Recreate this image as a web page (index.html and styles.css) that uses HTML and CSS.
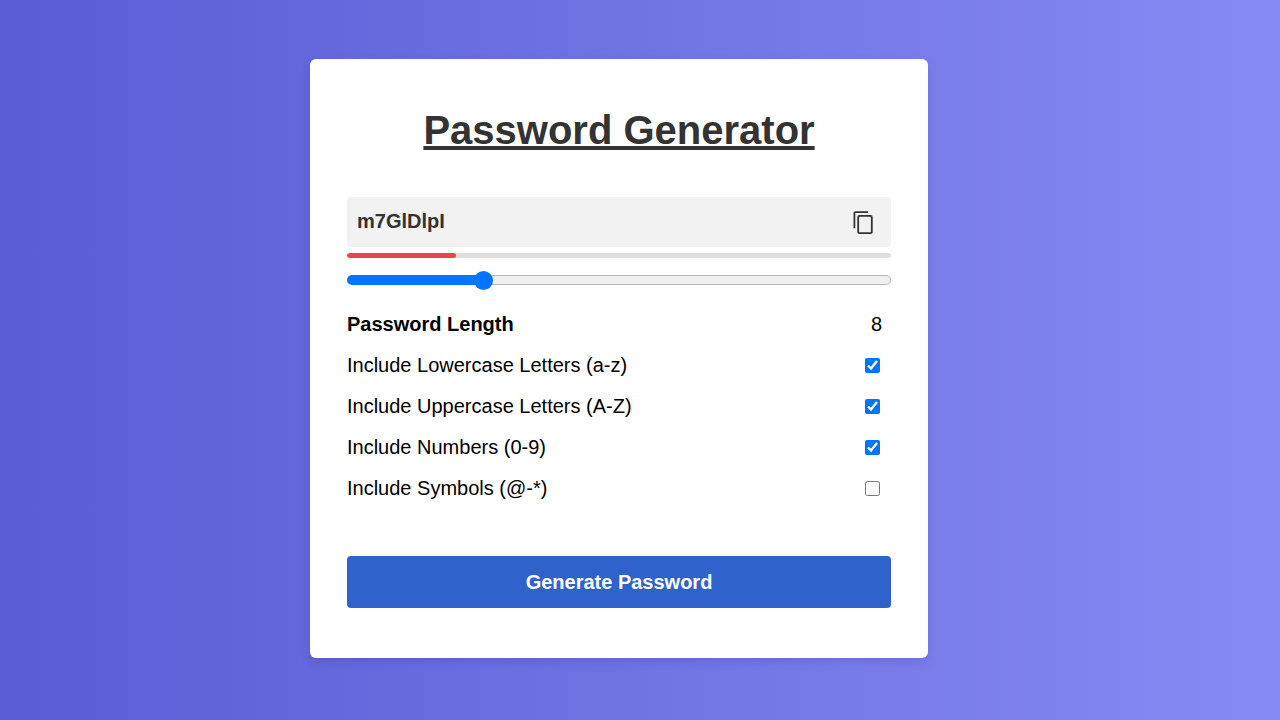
FILE: index.html
```html
<!DOCTYPE html>
<html lang="en">
<head>
<meta charset="utf-8">
<meta name="viewport" content="width=device-width, initial-scale=1">
<title>Password Generator</title>
<link rel="stylesheet" href="styles.css">
</head>
<body>
<main class="card">
  <h1 class="title">Password Generator</h1>
  <div class="display">
    <input class="display-value" type="text" readonly value="m7GlDlpI" aria-label="Generated password">
    <button class="copy" type="button" aria-label="Copy password">
      <svg class="copy-icon" viewBox="0 0 20 24" fill="none" stroke="currentColor" stroke-width="1.8" aria-hidden="true"><path d="M1.4 18.2V3.1Q1.4 2.1 2.4 2.1H15"/><rect x="5.2" y="5.9" width="13.6" height="17.2" rx="1"/></svg>
    </button>
  </div>
  <div class="strength"><div class="strength-fill"></div></div>
  <input class="slider" id="length" type="range" min="1" max="30" value="8" style="--fill: 24%">
  <div class="options">
    <div class="row"><label class="length-label" for="length">Password Length</label><output class="length-value" for="length">8</output></div>
    <div class="row"><label for="lower">Include Lowercase Letters (a-z)</label><input class="check" id="lower" type="checkbox" checked></div>
    <div class="row"><label for="upper">Include Uppercase Letters (A-Z)</label><input class="check" id="upper" type="checkbox" checked></div>
    <div class="row"><label for="numbers">Include Numbers (0-9)</label><input class="check" id="numbers" type="checkbox" checked></div>
    <div class="row"><label for="symbols">Include Symbols (@-*)</label><input class="check" id="symbols" type="checkbox"></div>
  </div>
  <button class="generate" type="button">Generate Password</button>
</main>
</body>
</html>
```
FILE: styles.css
```css
* {
  box-sizing: border-box;
}

body {
  margin: 0;
  min-height: 100vh;
  padding: 59px 0 62px;
  font: 20px/23px "Liberation Sans", Arial, sans-serif;
  color: #000;
  background: linear-gradient(to right, #595cd3, #868af4);
}

.card {
  width: 90%;
  max-width: 618px;
  margin-left: max(5%, calc(50% - 330px));
  padding: 48px 37px 50px;
  background: #fff;
  border-radius: 6px;
  box-shadow: 0 4px 10px rgba(0, 0, 0, 0.1);
}

.title {
  margin: 0 0 44px;
  font-size: 40px;
  line-height: 46px;
  text-align: center;
  text-decoration: underline;
  text-decoration-thickness: 4px;
  color: #333;
}

.display {
  display: flex;
  align-items: center;
  height: 50px;
  padding: 0 18px 0 10px;
  background: #f2f2f2;
  border-radius: 4px;
}

.display-value {
  flex: 1;
  min-width: 0;
  padding: 0 0 2px;
  border: 0;
  outline: 0;
  background: none;
  font: bold 20px/23px "Liberation Sans", Arial, sans-serif;
  color: #333;
}

.copy {
  display: flex;
  padding: 0;
  border: 0;
  background: none;
  color: #333;
  cursor: pointer;
}

.copy-icon {
  width: 20px;
  height: 24px;
}

.strength {
  height: 5px;
  margin-top: 6px;
  background: #dfdfdf;
  border-radius: 3px;
  overflow: hidden;
}

.strength-fill {
  width: 20%;
  height: 100%;
  background: #e84749;
  border-radius: 3px;
}

.slider {
  -webkit-appearance: none;
  appearance: none;
  display: block;
  width: 100%;
  height: 10px;
  margin: 17px 0 0;
  border: 1px solid transparent;
  border-radius: 5px;
  background:
    linear-gradient(#0075ff, #0075ff) left / var(--fill) 100% no-repeat border-box,
    linear-gradient(#efefef, #efefef) padding-box,
    linear-gradient(#b8b8b8, #b8b8b8) border-box;
  cursor: pointer;
}

.slider::-webkit-slider-thumb {
  -webkit-appearance: none;
  width: 19px;
  height: 19px;
  border-radius: 50%;
  background: #0075ff;
}

.options {
  display: flex;
  flex-direction: column;
  gap: 18px;
  padding: 28px 9px 0 0;
}

.row {
  display: flex;
  align-items: center;
  justify-content: space-between;
}

.length-label {
  font-weight: bold;
}

.check {
  width: 15px;
  height: 15px;
  margin: 0 2px 0 0;
  accent-color: #0075ff;
}

.generate {
  display: block;
  width: 100%;
  height: 52px;
  margin-top: 56px;
  border: 0;
  border-radius: 4px;
  background: #3062cc;
  color: #fff;
  font: bold 20px/23px "Liberation Sans", Arial, sans-serif;
  cursor: pointer;
}
```
